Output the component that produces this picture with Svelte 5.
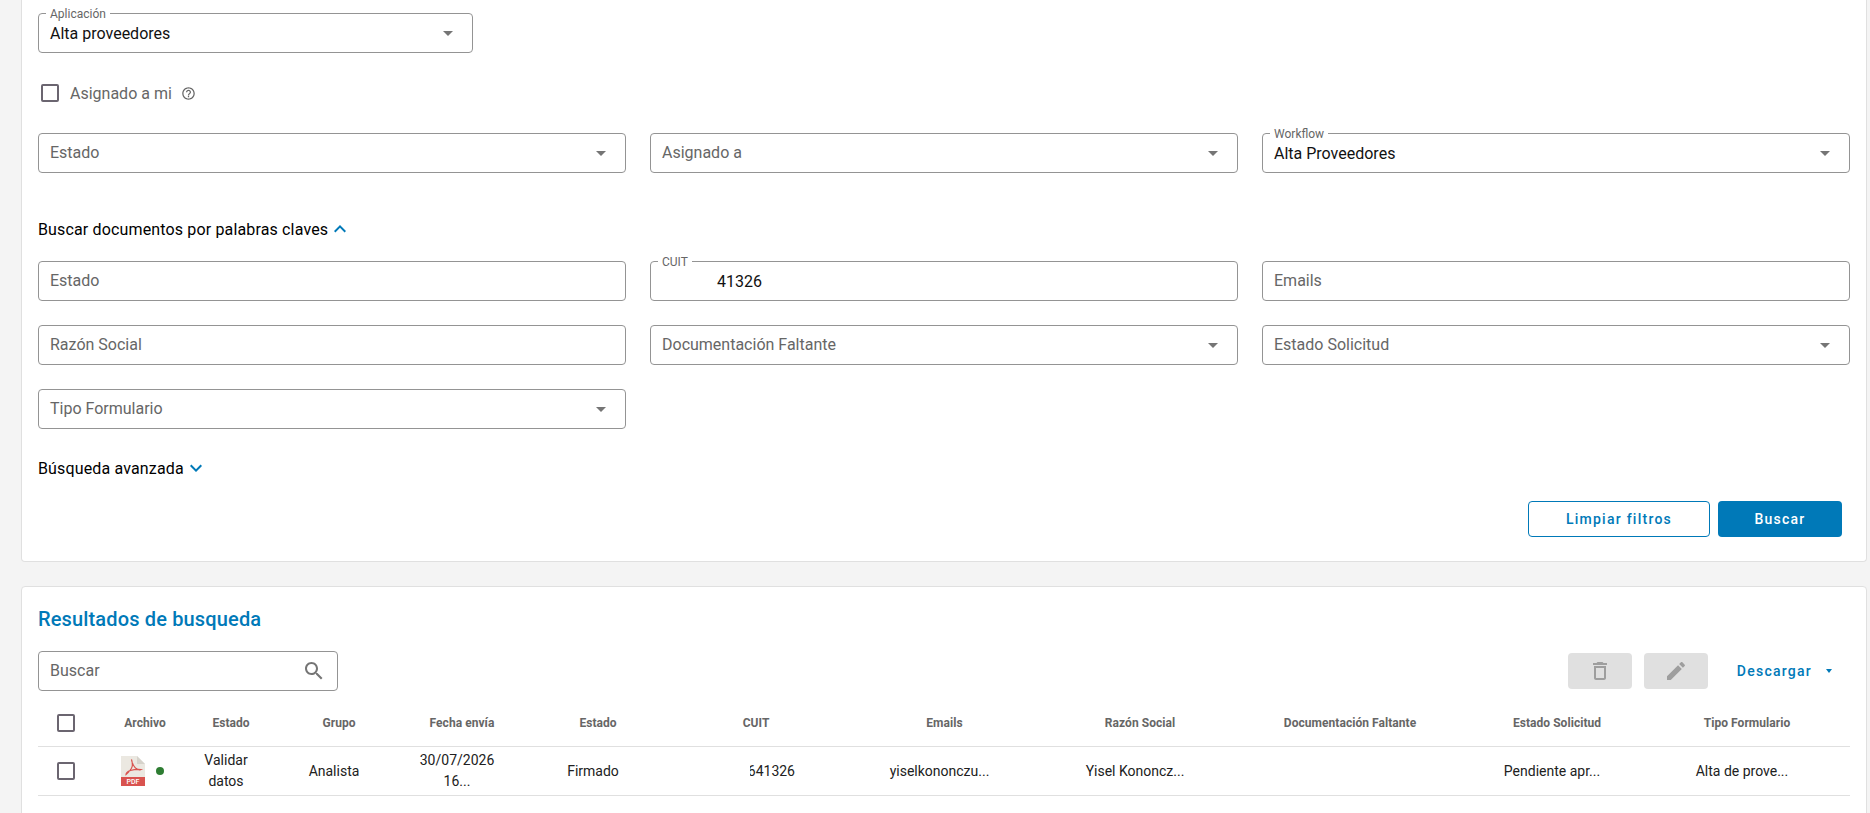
<script>
  const rowOne = [
    { label: 'Estado', select: true },
    { label: 'Asignado a', select: true },
    { label: 'Workflow', value: 'Alta Proveedores', select: true }
  ];
  const rowTwo = [
    { label: 'Estado' },
    { label: 'CUIT', value: '41326', indent: true },
    { label: 'Emails' },
    { label: 'Razón Social' },
    { label: 'Documentación Faltante', select: true },
    { label: 'Estado Solicitud', select: true },
    { label: 'Tipo Formulario', select: true }
  ];
  const headers = ['Archivo', 'Estado', 'Grupo', 'Fecha envía', 'Estado', 'CUIT', 'Emails', 'Razón Social', 'Documentación Faltante', 'Estado Solicitud', 'Tipo Formulario'];
</script>

{#snippet field(f)}
  <div class="field" class:filled={f.value}>
    {#if f.value}
      <span class="notch">{f.label}</span>
      <span class="value" class:indent={f.indent}>{f.value}</span>
    {:else}
      <span class="placeholder">{f.label}</span>
    {/if}
    {#if f.select}<span class="arrow"></span>{/if}
  </div>
{/snippet}

<div class="page">
  <section class="card filters">
    <div class="app-field">
      {@render field({ label: 'Aplicación', value: 'Alta proveedores', select: true })}
    </div>

    <div class="assigned">
      <span class="checkbox"></span>
      <span class="assigned-label">Asignado a mi</span>
      <svg class="help" viewBox="0 0 24 24" aria-hidden="true"><path d="M11 18h2v-2h-2v2zm1-16C6.48 2 2 6.48 2 12s4.48 10 10 10 10-4.48 10-10S17.52 2 12 2zm0 18c-4.41 0-8-3.59-8-8s3.59-8 8-8 8 3.59 8 8-3.59 8-8 8zm0-14c-2.21 0-4 1.79-4 4h2c0-1.1.9-2 2-2s2 .9 2 2c0 2-3 1.75-3 5h2c0-2.25 3-2.5 3-5 0-2.21-1.79-4-4-4z"/></svg>
    </div>

    <div class="grid">
      {#each rowOne as f}{@render field(f)}{/each}
    </div>

    <div class="toggle keywords">
      <span>Buscar documentos por palabras claves</span>
      <svg class="chev" viewBox="0 0 24 24" aria-hidden="true"><path d="M12 8l-6 6 1.41 1.41L12 10.83l4.59 4.58L18 14z"/></svg>
    </div>

    <div class="grid">
      {#each rowTwo as f}{@render field(f)}{/each}
    </div>

    <div class="toggle advanced">
      <span>Búsqueda avanzada</span>
      <svg class="chev" viewBox="0 0 24 24" aria-hidden="true"><path d="M16.59 8.59L12 13.17 7.41 8.59 6 10l6 6 6-6z"/></svg>
    </div>

    <div class="form-actions">
      <button class="btn outline">Limpiar filtros</button>
      <button class="btn solid">Buscar</button>
    </div>
  </section>

  <section class="card results">
    <h2>Resultados de busqueda</h2>

    <div class="toolbar">
      <div class="field search">
        <span class="placeholder">Buscar</span>
        <svg class="search-icon" viewBox="0 0 24 24" aria-hidden="true"><path d="M15.5 14h-.79l-.28-.27C15.41 12.59 16 11.11 16 9.5 16 5.91 13.09 3 9.5 3S3 5.91 3 9.5 5.91 16 9.5 16c1.61 0 3.09-.59 4.23-1.57l.27.28v.79l5 4.99L20.49 19l-4.99-5zm-6 0C7.01 14 5 11.99 5 9.5S7.01 5 9.5 5 14 7.01 14 9.5 11.99 14 9.5 14z"/></svg>
      </div>
      <div class="tools">
        <button class="icon-btn" aria-label="Eliminar">
          <svg viewBox="0 0 24 24" aria-hidden="true"><path d="M6 19c0 1.1.9 2 2 2h8c1.1 0 2-.9 2-2V7H6v12zM8 9h8v10H8V9zm7.5-5l-1-1h-5l-1 1H5v2h14V4z"/></svg>
        </button>
        <button class="icon-btn" aria-label="Editar">
          <svg viewBox="0 0 24 24" aria-hidden="true"><path d="M3 17.25V21h3.75L17.81 9.94l-3.75-3.75L3 17.25zM20.71 7.04c.39-.39.39-1.02 0-1.41l-2.34-2.34c-.39-.39-1.02-.39-1.41 0l-1.83 1.83 3.75 3.75 1.83-1.83z"/></svg>
        </button>
        <button class="download">Descargar<span class="caret"></span></button>
      </div>
    </div>

    <div class="table">
      <div class="tr head">
        <div class="td"><span class="checkbox"></span></div>
        {#each headers as h}<div class="th">{h}</div>{/each}
      </div>
      <div class="tr body">
        <div class="td"><span class="checkbox"></span></div>
        <div class="cell file">
          <svg class="pdf" viewBox="0 0 24 30" aria-hidden="true">
            <path d="M0 0H16L24 8V30H0Z" fill="#ebe8e1"/>
            <path d="M16 0L24 8H16Z" fill="#d6d3cb"/>
            <path d="M0 21H24V30H0Z" fill="#d9534f"/>
            <path d="M10.5 3.5C12 9 12.5 12 5 18.5C5 15 12 13 20 13.5C16 15.5 11.5 10 10.5 3.5Z" fill="none" stroke="#d9534f" stroke-width="1.2"/>
            <text x="12" y="28.2" text-anchor="middle" class="pdf-text">PDF</text>
          </svg>
          <span class="dot"></span>
        </div>
        <div class="cell">Validar<br />datos</div>
        <div class="cell">Analista</div>
        <div class="cell">30/07/2026<br />16...</div>
        <div class="cell">Firmado</div>
        <div class="cell cuit"><span>641326</span></div>
        <div class="cell">yiselkononczu...</div>
        <div class="cell">Yisel Kononcz...</div>
        <div class="cell"></div>
        <div class="cell">Pendiente apr...</div>
        <div class="cell">Alta de prove...</div>
      </div>
    </div>
  </section>
</div>

<style>
  :global(body) {
    margin: 0;
    background: #f4f4f4;
    font-family: Roboto, "Liberation Sans", sans-serif;
  }
  * { box-sizing: border-box; }

  .page {
    height: 813px;
    overflow: hidden;
    padding: 0 3px 0 21px;
  }
  .card {
    background: #fff;
    border: 1px solid #e0e0e0;
    border-radius: 4px;
    padding: 0 16px;
  }
  .filters {
    border-top: 0;
    border-top-left-radius: 0;
    border-top-right-radius: 0;
    padding-top: 13px;
    padding-bottom: 24px;
    height: 562px;
  }
  .results {
    margin-top: 24px;
    padding-top: 16px;
    height: 300px;
  }

  .app-field { width: 435px; }
  .grid {
    display: grid;
    grid-template-columns: repeat(3, 1fr);
    gap: 24px;
  }
  .field {
    position: relative;
    display: flex;
    align-items: center;
    height: 40px;
    padding: 0 11px;
    border: 1px solid #949494;
    border-radius: 4px;
    font-size: 16px;
  }
  .placeholder {
    margin-bottom: 2px;
    color: #666;
  }
  .value { color: #111; }
  .value.indent { margin-left: 55px; }
  .notch {
    position: absolute;
    top: -7px;
    left: 7px;
    padding: 0 4px;
    background: #fff;
    color: #666;
    font-size: 12px;
    line-height: 14px;
  }
  .arrow {
    position: absolute;
    right: 19px;
    top: 17px;
    border-left: 5px solid transparent;
    border-right: 5px solid transparent;
    border-top: 5px solid #757575;
  }

  .assigned {
    display: flex;
    align-items: center;
    height: 32px;
    margin: 24px 0;
    padding-left: 3px;
  }
  .checkbox {
    display: block;
    width: 18px;
    height: 18px;
    border: 2px solid #6b6570;
    border-radius: 2px;
    background: #fff;
  }
  .assigned-label {
    margin-left: 11px;
    color: #666;
    font-size: 16px;
  }
  .help {
    width: 15px;
    height: 15px;
    margin-left: 9px;
    fill: #666;
  }

  .toggle {
    display: flex;
    align-items: center;
    height: 32px;
    color: #000;
    font-size: 16px;
    letter-spacing: 0.15px;
  }
  .chev {
    width: 24px;
    height: 24px;
    fill: #0079b8;
  }
  .keywords { margin: 40px 0 16px; }
  .advanced { margin-top: 23px; }

  .form-actions {
    display: flex;
    justify-content: flex-end;
    gap: 8px;
    margin-top: 17px;
    padding-right: 8px;
  }
  .btn {
    height: 36px;
    border-radius: 4px;
    font-family: inherit;
    font-size: 14px;
    font-weight: 500;
    letter-spacing: 1.25px;
  }
  .outline {
    width: 182px;
    background: #fff;
    border: 1px solid #0079b8;
    color: #0079b8;
  }
  .solid {
    width: 124px;
    background: #0079b8;
    border: 0;
    color: #fff;
  }

  h2 {
    margin: 0;
    height: 32px;
    line-height: 32px;
    color: #0079b8;
    font-size: 20px;
    font-weight: 500;
    letter-spacing: 0.15px;
  }
  .toolbar {
    display: flex;
    justify-content: space-between;
    align-items: center;
    margin-top: 16px;
  }
  .search { width: 300px; }
  .search-icon {
    position: absolute;
    right: 11px;
    top: 7px;
    width: 24px;
    height: 24px;
    fill: #757575;
  }
  .tools {
    display: flex;
    align-items: center;
    gap: 12px;
    padding-right: 8px;
  }
  .icon-btn {
    display: flex;
    align-items: center;
    justify-content: center;
    width: 64px;
    height: 36px;
    padding: 0;
    border: 0;
    border-radius: 4px;
    background: #e0e0e0;
  }
  .icon-btn svg {
    width: 24px;
    height: 24px;
    fill: #9e9e9e;
  }
  .download {
    display: flex;
    align-items: center;
    height: 36px;
    margin-left: 1px;
    padding: 0 10px 0 16px;
    border: 0;
    background: none;
    color: #0079b8;
    font-family: inherit;
    font-size: 14px;
    font-weight: 500;
    letter-spacing: 1.25px;
  }
  .caret {
    margin-left: 14px;
    border-left: 3.5px solid transparent;
    border-right: 3.5px solid transparent;
    border-top: 4px solid #0079b8;
  }

  .table { margin-top: 8px; }
  .tr {
    display: grid;
    grid-template-columns: 67px 80px 92px 124px 122px 150px 166px 211px 180px 240px 174px 206px;
    align-items: center;
    border-bottom: 1px solid #e0e0e0;
  }
  .head { height: 48px; }
  .body { height: 49px; }
  .td { padding-left: 19px; }
  .th {
    text-align: center;
    color: #666;
    font-size: 12px;
    font-weight: 700;
    letter-spacing: 0.05px;
  }
  .cell {
    padding-right: 10px;
    text-align: center;
    color: #212121;
    font-size: 14px;
    line-height: 21px;
  }
  .file {
    display: flex;
    align-items: center;
    padding: 0 0 0 16px;
    gap: 11px;
  }
  .pdf {
    display: block;
    width: 24px;
    height: 30px;
    flex: none;
  }
  .pdf-text {
    fill: #fff;
    font-family: Roboto, sans-serif;
    font-size: 7px;
    font-weight: 500;
  }
  .dot {
    width: 8px;
    height: 8px;
    border-radius: 50%;
    background: #2e7d32;
  }
  .cuit {
    display: flex;
    justify-content: flex-end;
    padding-right: 44px;
  }
  .cuit span {
    display: block;
    width: 45px;
    overflow: hidden;
    direction: rtl;
    white-space: nowrap;
  }
</style>
